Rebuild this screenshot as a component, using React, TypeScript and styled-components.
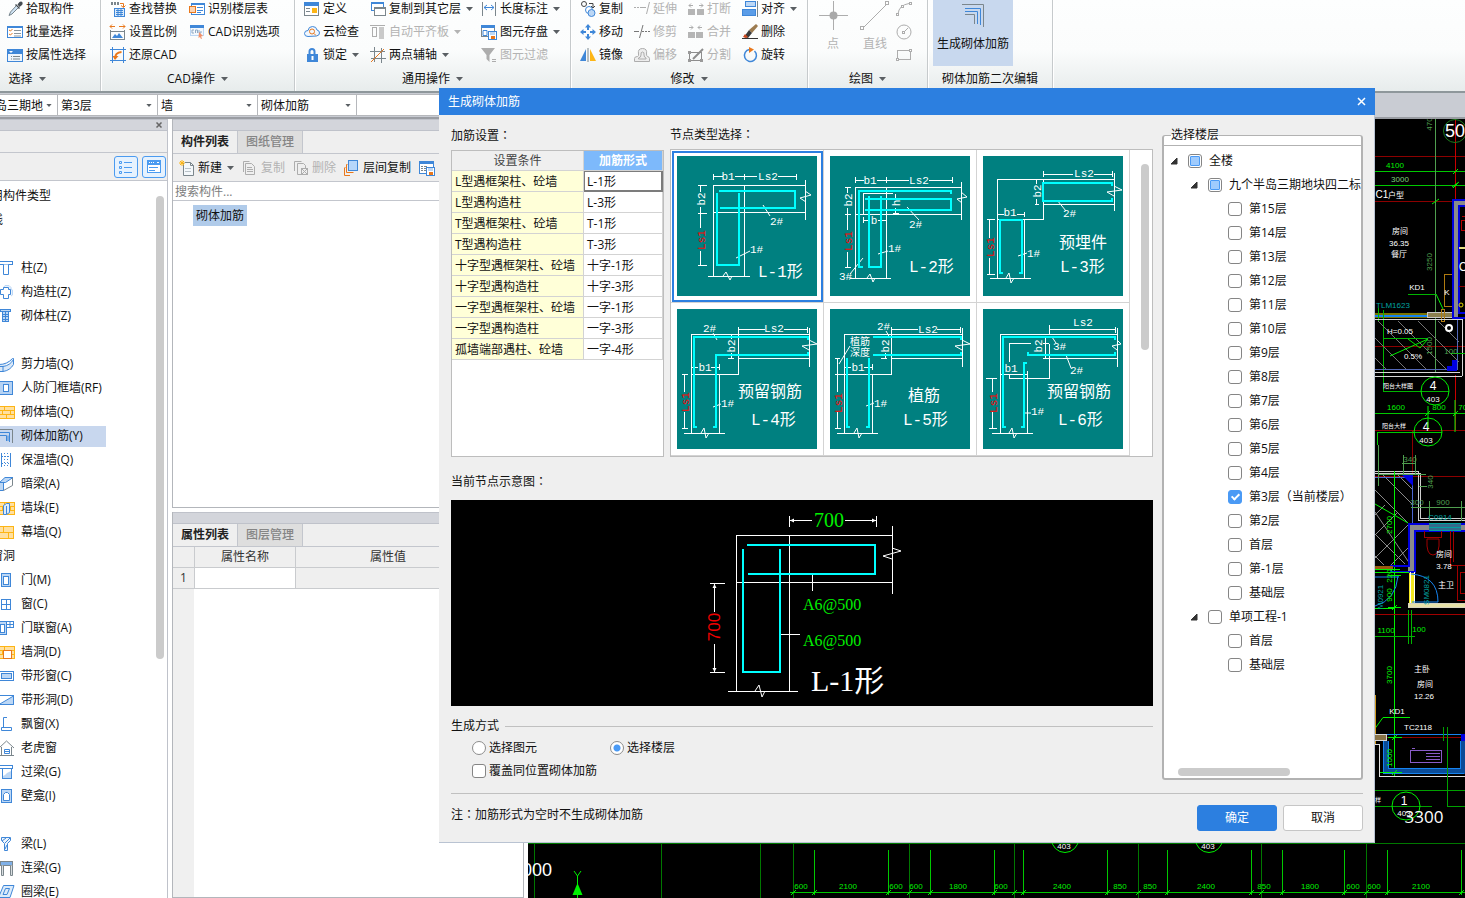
import React from "react";
import styled, { createGlobalStyle, css } from "styled-components";

/* ---------- theme values ---------- */
const BLUE = "#3f87d8";
const PALE = "#bcd7f5";
const GREY = "#7b868c";
const ORANGE = "#e9781c";
const AMBER = "#fdb515";
const SAND = "#ffe0a0";
const MUTE = "#adadad";
const UI_FONT = '"Open Sans", "Noto Sans CJK SC", sans-serif';
const CAD_FONT = '"Liberation Sans", "Noto Sans CJK SC", sans-serif';
const DRAFT_FONT = '"Liberation Mono", "Noto Sans CJK SC", monospace';
const SERIF_FONT = '"Liberation Serif", "Noto Sans CJK SC", serif';

const GlobalStyle = createGlobalStyle`
  *, *::before, *::after { box-sizing: border-box; }
  html, body, #root { height: 100%; }
  body { margin: 0; overflow: hidden; background: #fff; color: #111; font: 12px/16px ${UI_FONT}; }
  button, input, select { font: inherit; color: inherit; }
  ul { list-style: none; margin: 0; padding: 0; }
`;

/* ---------- icons ---------- */
const box = (x: number, y: number, w: number, h: number, stroke: string, fill = "none") => (
  <rect x={x} y={y} width={w} height={h} stroke={stroke} fill={fill} />
);
const line = (d: string, stroke: string, width = 1, fill = "none") => (
  <path d={d} stroke={stroke} strokeWidth={width} fill={fill} />
);
const solid = (d: string, fill: string) => <path d={d} fill={fill} />;

const bricks = (
  <>
    {box(-0.5, 2.5, 16, 12, AMBER, SAND)}
    {line("M0 6.500H15M0 10.500H15M5.500 2.500V6.500M11.500 6.500V10.500M3.500 6.500V10.500M7.500 10.500V14.500", AMBER)}
  </>
);
const floppy = (
  <>
    {box(7.5, 7.5, 8, 8, BLUE, "#fff")}
    {solid("M9 8h5v3h-5z", PALE)}
    {solid("M10 12h4v3h-4z", ORANGE)}
  </>
);

const icons: Record<string, React.ReactNode> = {
  dropper: (
    <>
      {solid("M9 3l4 4-1 1-4-4zM10.500 3.500l2-2.500q2-1 3 .5 .5 1.500-.5 2.500l-2.500 2z", "#454c52")}
      {line("M9 5L3.500 11 2 14.500 5 13 11 7", "#76848c", 1, "#cfe3f4")}
    </>
  ),
  checklist: (
    <>
      {box(0.5, 2.5, 15, 11, BLUE, "#fff")}
      {solid("M0 2h16v2H0z", BLUE)}
      {line("M7 6.500h7M7 9.500h7M7 12h7", "#8b959b")}
      {line("M2 6l1.500 1L5.500 5M2 10l1.500 1L5.500 9", ORANGE)}
    </>
  ),
  attrs: (
    <>
      {box(0.5, 2.5, 15, 12, BLUE, "#eef5fc")}
      {solid("M0 2h16v5H0z", BLUE)}
      {solid("M2 4h4l-2 2z", "#fff")}
      {line("M4 9.500h1M6 9.500h7M4 12h1M6 12h7", GREY)}
    </>
  ),
  replace: (
    <>
      {solid("M1 1h2v3H1zM4 1h2v3H4zM7 1h2v3H7z", GREY)}
      {line("M10 2.500h3.500V6M11 4.500l2.500 2 2-2", ORANGE)}
      {box(4.5, 7.5, 10, 8, BLUE, "#dcebfa")}
      {line("M6 9.500h7M6 11.500h7M6 13.500h7M8 8v7M11 8v7", BLUE)}
    </>
  ),
  scale: (
    <>
      {line("M0 2.500h5M2 .5l-2 2 2 2M9 2.500h6M13 .5l2 2-2 2", ORANGE)}
      {line("M.5 6v10M14.500 6v10M0 7.500h15M0 15.500h15", GREY)}
      {solid("M2 14l3-4 2 2 2-3 4 5z", BLUE)}
    </>
  ),
  restore: (
    <>
      {line("M2.500 0v16M13.500 0v16M0 2.500h16M0 13.500h16", BLUE)}
      {line("M5 11.500q0-6 6.500-6.500", ORANGE, 2)}
      {solid("M2.500 9h6L5 13z", ORANGE)}
    </>
  ),
  floorTable: (
    <>
      {box(2.5, 2.5, 13, 11, BLUE, "#fff")}
      {solid("M2 2h14v2H2z", BLUE)}
      {box(0.5, 5.5, 6, 6, ORANGE, "#fbd4b4")}
      {line("M8 6.500h6M8 9.500h6M8 11.500h4", BLUE)}
    </>
  ),
  cadOption: (
    <>
      {box(1.5, 2.5, 13, 9, PALE, "#f3f8fd")}
      {solid("M1 1h14v3H1z", BLUE)}
      {line("M5 6H3v3h2M6.500 9V6h2v3M10 6v3h2V7", "#8fa9c4")}
      {solid("M10 8l4 4-2 .5 1 2-1 .5-1-2-1.500 1z", "#f2916a")}
    </>
  ),
  define: (
    <>
      {box(0.5, 2.5, 14, 12, GREY, "#fff")}
      {solid("M0 1h15v4H0z", BLUE)}
      {line("M2 7.500h4M2 10.500h4", GREY)}
      {solid("M8 7h5v5H8z", AMBER)}
    </>
  ),
  cloud: (
    <>
      {line("M4 12.500q-3.500 0-3.500-3T4 6.500q.5-4 4.500-4t4.500 3.500q2.500.5 2.500 3t-3 3z", BLUE, 1, "#f1f7fe")}
      <circle cx="8" cy="7.500" r="2.500" stroke={ORANGE} fill="none" />
      {line("M10 9.500l2 2", ORANGE)}
    </>
  ),
  lock: (
    <>
      {line("M5.500 8V4.500q0-2.500 2.500-2.500t2.500 2.500V8", BLUE, 2)}
      {solid("M3 7h11v8H3z", BLUE)}
      {solid("M7.500 9h2v4h-2z", "#fff")}
    </>
  ),
  copyFloor: (
    <>
      {box(1.5, 1.5, 12, 8, BLUE, "#fff")}
      {solid("M1 1h13v2H1z", BLUE)}
      {box(4.5, 6.5, 11, 8, GREY, "#fff")}
      {solid("M4 6h12v2H4z", GREY)}
    </>
  ),
  slab: (
    <>
      {line("M0 1.500h15", MUTE)}
      {box(2.5, 3.5, 4, 9, MUTE)}
      {solid("M9 3h5v12H9z", "#c9c9c9")}
    </>
  ),
  axis: (
    <>
      {line("M4.500 0v15M11.500 1v15M0 4.500h15M1 11.500h15", GREY)}
      {line("M1 15L14 2", ORANGE)}
    </>
  ),
  length: (
    <>
      {line("M1.500 1v14M14.500 1v14", GREY)}
      {line("M3 6.500h10M6 4L3 6.500 6 9M10 4l3 2.500L10 9", BLUE)}
    </>
  ),
  store: (
    <>
      {box(0.5, 1.5, 13, 11, GREY, "#fff")}
      {solid("M0 1h14v3H0z", BLUE)}
      {line("M2 6.500h4v5H2z", BLUE)}
      {floppy}
    </>
  ),
  filter: (
    <>
      {solid("M0 1h14L8.500 8v7L5.500 12V8z", MUTE)}
      {line("M11 12.500h4M11 14.500h4", MUTE)}
    </>
  ),
  duplicate: (
    <>
      <circle cx="4" cy="3" r="2.500" stroke="#444" fill="none" />
      {line("M9 2.500h4V7M11 5l2 2 2-2", "#444")}
      <circle cx="9" cy="9" r="3.500" stroke={BLUE} fill="#fff" />
      <circle cx="11.500" cy="12" r="3.500" stroke={BLUE} fill={PALE} />
    </>
  ),
  move: (
    <>
      {solid("M8 0l3 3.500H9V6H7V3.500H5zM8 16l3-3.500H9V10H7v2.500H5zM0 8l3.500-3v2H6v2H3.500v2zM16 8l-3.500-3v2H10v2h2.500v2z", BLUE)}
    </>
  ),
  mirror: (
    <>
      {solid("M6 2v12H0z", BLUE)}
      {line("M8 1v14", GREY)}
      {solid("M10 2v12h6z", AMBER)}
    </>
  ),
  extend: line("M0 6.500h2M3 6.500h2M6 6.500h2M8 6.500h4M15.500 1l-3 12", MUTE),
  trim: line("M0 7.500h5M9 1L5.500 14M8 7.500h2M11 7.500h2M14 7.500h2", "#777"),
  offset: (
    <>
      {line("M.5 14.500v-3q0-2 3-2 1.500-.5 1-2.500-1-5.500 4-5.500t4 5.500q0 2 1 2.500 2 .5 2 2v3z", MUTE, 1, "#ededed")}
      {line("M4.500 12v-1q2.500-.5 2.500-3-.5-3 1.500-3t1.500 3q0 2.500 2 3v1z", MUTE)}
    </>
  ),
  breakUp: (
    <>
      {solid("M0 8h7v6H0zM9 8h7v6H9z", "#b5b5b5")}
      {line("M1 4.500h4M3 2.500l-2 2 2 2M11 4.500h4M13 2.500l2 2-2 2", MUTE)}
    </>
  ),
  merge: (
    <>
      {solid("M0 8h7v6H0zM8 8h7v6H8z", "#b5b5b5")}
      {line("M1 3.500h4M3 1.500l2 2-2 2M10 3.500h4M12 1.500l-2 2 2 2", MUTE)}
    </>
  ),
  split: (
    <>
      {box(1.5, 5.5, 12, 8, "#8d8d8d")}
      {solid("M0 4h3v3H0zM0 12h3v3H0zM12 12h3v3h-3z", "#9a9a9a")}
      {line("M15 2L5 12", "#8d8d8d", 2)}
    </>
  ),
  align: (
    <>
      {box(3.5, 0.5, 10, 5, BLUE, PALE)}
      {box(0.5, 8.5, 13, 6, BLUE, "#5b9de8")}
      {line("M15.500 0v16", GREY)}
    </>
  ),
  erase: (
    <>
      {line("M0 14.500h16", "#333")}
      {solid("M14 0l2 2-6 7-3-3z", "#9c7b50")}
      {solid("M7 6l3 3-4 5-4-1z", "#3a3a3a")}
      {solid("M3 10l3 3-2 1-3-1z", "#cc4a20")}
    </>
  ),
  rotate: (
    <>
      <path d="M12.500 4a6 6 0 1 1-5-1.500" stroke={BLUE} strokeWidth="1.500" fill="none" />
      {solid("M7 0l5 2.500L7 6z", ORANGE)}
    </>
  ),
  arc: (
    <>
      {line("M2 13Q3 4 13 2.500", MUTE)}
      {box(0.5, 12.5, 2, 2, MUTE, "#fff")}
      {box(5.5, 4.5, 2, 2, MUTE, "#fff")}
      {box(13.5, 1.5, 2, 2, MUTE, "#fff")}
    </>
  ),
  circle: (
    <>
      <circle cx="8" cy="8" r="7" stroke={MUTE} fill="none" />
      {line("M8 8l4-4", MUTE)}
      {box(6.5, 7.5, 2, 2, MUTE, "#fff")}
    </>
  ),
  rect: (
    <>
      {box(1.5, 3.5, 13, 9, MUTE)}
      {box(0.5, 11.5, 2, 2, MUTE, "#fff")}
      {box(13.5, 2.5, 2, 2, MUTE, "#fff")}
    </>
  ),
  newItem: (
    <>
      {line("M4.500 3V15.500h10V5.500L11.500 2.500H6", GREY, 1, "#f4f8fb")}
      {line("M11.500 2.500v3h3", GREY)}
      {line("M6 8.500h6M6 11.500h6", "#b9c2c8")}
      {line("M1 1l4 4M5 1L1 5M3 0v6M0 3h6", AMBER)}
    </>
  ),
  copyDoc: (
    <>
      {line("M1.500 12V1.500h6", MUTE)}
      {line("M3.500 3.500h6l3 3v8h-9z", MUTE)}
      {line("M5 7.500h5M5 9.500h6M5 11.500h6", MUTE)}
    </>
  ),
  removeDoc: (
    <>
      {line("M1.500 11V1.500h7", MUTE)}
      {line("M8 14.500H4.500v-11h6l2 2V8", MUTE)}
      {box(8.5, 8.5, 6, 6, MUTE)}
      {line("M9 9l5 5M14 9l-5 5", MUTE)}
    </>
  ),
  floorCopy: (
    <>
      {line("M3.500 4.500h-1v8h7M.5 8v7.500H6", ORANGE)}
      {line("M.5 7.500h1", ORANGE)}
      {box(4.5, 0.5, 9, 10, BLUE, "#b6d6fa")}
    </>
  ),
  tableSave: (
    <>
      {box(0.5, 1.5, 14, 12, BLUE, "#fff")}
      {solid("M0 1h15v3H0z", BLUE)}
      {line("M2 6.500h2M5 6.500h3M2 8.500h2M5 8.500h2M2 10.500h2M5 10.500h2", GREY)}
      {floppy}
    </>
  ),
  column: (
    <>
      {box(0.5, 1.5, 13, 3, BLUE, "#fff")}
      {line("M4.500 4.500v10h5v-10", BLUE, 1, "#fff")}
    </>
  ),
  structColumn: (
    <>
      {line("M4.500 3.500l1.500-2h4l2 2v1.500l1.500 1v5l-1.500 1", PALE, 1, "#e9f2fc")}
      {line("M4.500 5.500v-2h5v2h2v5h-2v4h-5v-4h-3v-5z", BLUE, 1, "#fff")}
    </>
  ),
  brickColumn: (
    <>
      {box(1.5, 1.5, 10, 2, BLUE, PALE)}
      {box(3.5, 3.5, 6, 10, BLUE, PALE)}
      {line("M3 6.500h7M3 8.500h7M3 11.500h7M6.500 4v9", BLUE)}
    </>
  ),
  shearWall: line("M0 8.500q8 0 13.500-6h1v6Q11 14.500 4 15.500H0zM0 10.500h4v5M4 10.500q7-1 10.500-7", BLUE, 1, "#d9e8f8"),
  frameWall: (
    <>
      {box(0.5, 1.5, 13, 13, BLUE, "#b5d2f3")}
      {box(4.5, 4.5, 5, 7, BLUE, "#fff")}
    </>
  ),
  brickWall: bricks,
  rebar: (
    <>
      {line("M0 1.500h13.500V15", GREY)}
      {line("M0 4.500h10.500V14", BLUE)}
      {line("M1 7.500h6.500V13M9 7.500V13", BLUE)}
    </>
  ),
  insulation: (
    <>
      {line("M2.500 1v14M11.500 1v14", BLUE)}
      <path d="M5.500 1v14M8.500 1v14M0 4.500h12M0 11.500h12" stroke={BLUE} strokeDasharray="1 2" fill="none" />
    </>
  ),
  hiddenBeam: (
    <>
      {line("M.5 6.500L6 1.500h8L6.500 6.500zM.5 6.500h4v8h-4z", BLUE, 1, PALE)}
      {line("M4.500 14.500L13.500 9.500V2", GREY)}
    </>
  ),
  pier: (
    <>
      {bricks}
      {line("M4.500 5.500l3-2h3v9l-3 2h-3zM7.500 6v8", BLUE, 1, "#dcebfa")}
    </>
  ),
  curtainWall: (
    <>
      {box(-0.5, 2.5, 15, 12, AMBER, SAND)}
      {line("M0 8.500h14M4.500 2.500v6M9.500 8.500v6", AMBER)}
    </>
  ),
  door: (
    <>
      {box(2.5, 1.5, 9, 13, BLUE, PALE)}
      {box(4.5, 4.5, 5, 8, BLUE, "#fff")}
    </>
  ),
  window: (
    <>
      {box(2.5, 3.5, 9, 10, BLUE, "#fff")}
      {line("M7.500 3v11M2 8.500h10", BLUE)}
    </>
  ),
  doorWindow: (
    <>
      {box(-0.5, 1.5, 8, 13, BLUE, PALE)}
      {box(1.5, 4.5, 4, 8, BLUE, "#fff")}
      {box(7.5, 1.5, 7, 6, BLUE, "#fff")}
      {line("M11 1v7M7 4.500h8", BLUE)}
    </>
  ),
  wallHole: (
    <>
      {bricks}
      {box(4.5, 6.5, 8, 8, ORANGE, "#fff")}
    </>
  ),
  bandWindow: (
    <>
      {box(-0.5, 3.5, 15, 9, BLUE, "#fff")}
      {box(2.5, 5.5, 10, 5, BLUE, PALE)}
    </>
  ),
  bandHole: (
    <>
      {box(-0.5, 3.5, 15, 9, BLUE, "#fff")}
      {line("M0 12.500L14.500 4v8.500z", BLUE, 1, PALE)}
    </>
  ),
  bayWindow: line("M8 1.500H4.500v10h8v3h-10v-3h3", BLUE),
  dormer: (
    <>
      {line("M0 8L7.500 1 15 8M2.500 7v8.500h10V7M0 15.500h15", GREY)}
      {line("M5.500 9.500h5v4h-5zM5 11.500h6", BLUE)}
    </>
  ),
  lintel: (
    <>
      {box(0.5, 1.5, 13, 3, BLUE, "#fff")}
      {box(3.5, 4.5, 9, 10, BLUE, "#fff")}
      {solid("M4 12l2-1 2-2 4-2v7H4z", PALE)}
    </>
  ),
  niche: (
    <>
      {box(2.5, 1.5, 10, 13, BLUE, PALE)}
      {line("M4.500 12.500v-6l2-2h2l2 2v6z", BLUE, 1, "#fff")}
    </>
  ),
  beam: line("M2.500 1.500h9v3l-3 3v7h-3v-7l-3-3zM3 5l4-3M6 13l2-4M6 7l5-5", BLUE, 1, "#eef5fc"),
  linkBeam: (
    <>
      {box(1.5, 1.5, 12, 4, GREY, "#7fb0e8")}
      {line("M2.500 5.500v10h2v-10M11.500 5.500v10h2v-10", GREY, 1, "#d9dee1")}
    </>
  ),
  ringBeam: line("M4.500 1.500h10.500l-4 12H-.5zM6.500 4.500h4l-2.500 6h-4z", BLUE, 1, "#dcebfa"),
  listView: line("M1.500 2.500h2v2h-2zM1.500 7.500h2v2h-2zM1.500 12.500h2v2h-2zM6 3.500h8M6 8.500h8M6 13.500h8", "#4b9bf0"),
  panelView: (
    <>
      {box(1.5, 1.5, 13, 12, "#4b9bf0", "#fff")}
      {solid("M1 1h14v5H1z", "#4b9bf0")}
      {line("M3 3.500h1M5 3.500h1M7 3.500h1M11 3.500h2", "#fff")}
      {line("M3 8.500h9M3 11.500h6", "#4b9bf0")}
    </>
  ),
};

const IconSvg = styled.svg`
  flex: none;
  width: 16px;
  height: 16px;
  overflow: visible;
`;
const Icon = ({ name }: { name: string }) => (
  <IconSvg viewBox="0 0 16 16" aria-hidden="true">
    {icons[name]}
  </IconSvg>
);

const CaretSvg = styled.svg`
  flex: none;
  width: 7px;
  height: 4px;
`;
const Caret = ({ color = "#5a5f63" }: { color?: string }) => (
  <CaretSvg viewBox="0 0 7 4" aria-hidden="true">
    <path d="M0 0h7L3.500 4z" fill={color} />
  </CaretSvg>
);

/* Full-width colon set in the middle of its cell */
const Colon = styled.span.attrs({ children: "：" })`
  font-family: "Noto Sans CJK JP", sans-serif;
  line-height: 1;
`;

/* ---------- shell ---------- */
const Shell = styled.div`
  display: flex;
  flex-direction: column;
  height: 100vh;
  overflow: hidden;
  position: relative;
`;

/* ---------- ribbon ---------- */
const Ribbon = styled.header`
  display: flex;
  flex: none;
  overflow: hidden;
  background: linear-gradient(#fdfefe 0, #fbfcfc 55%, #e7ecec 100%);
  border-bottom: 2px solid #8e979b;
`;
const Group = styled.section<{ $width: number; $offset?: number }>`
  display: flex;
  flex-direction: column;
  flex: none;
  width: ${(p) => p.$width}px;
  margin-left: ${(p) => p.$offset ?? 0}px;
  border-right: 1px solid #c6cacc;
  box-shadow: 1px 0 0 #fff;
`;
const GroupBody = styled.div<{ $pad: number }>`
  display: flex;
  height: 66px;
  padding-left: ${(p) => p.$pad}px;
`;
const GroupLabel = styled.div`
  display: flex;
  align-items: center;
  justify-content: center;
  gap: 6px;
  height: 25px;
`;
const ToolColumn = styled.div<{ $width?: number }>`
  flex: none;
  width: ${(p) => (p.$width ? p.$width + "px" : "auto")};
  margin-top: -3px;
`;
const ToolButton = styled.button`
  display: flex;
  align-items: center;
  gap: 3px;
  height: 23px;
  padding: 0;
  border: 0;
  background: none;
  white-space: nowrap;
  &:disabled {
    color: #b3b3b3;
  }
  ${CaretSvg} {
    margin-left: 2px;
  }
`;
const BigTool = styled.button`
  display: flex;
  flex-direction: column;
  align-items: center;
  flex: none;
  width: 42px;
  padding: 0;
  border: 0;
  background: none;
  gap: 4px;
  color: #b3b3b3;
  svg {
    width: 32px;
    height: 32px;
  }
`;
const ActiveTool = styled(BigTool)`
  width: 80px;
  height: 66px;
  color: #111;
  background: #c8d8ee;
`;

type Tool = [icon: string, label: string, disabled?: boolean, menu?: boolean];
type ToolGroup = { label: string; width: number; offset?: number; pad: number; columns: { width?: number; tools: Tool[] }[] };

const toolGroups: ToolGroup[] = [
  {
    label: "选择", width: 147, offset: -46, pad: 53,
    columns: [{ tools: [["dropper", "拾取构件"], ["checklist", "批量选择"], ["attrs", "按属性选择"]] }],
  },
  {
    label: "CAD操作", width: 194, pad: 9,
    columns: [
      { width: 79, tools: [["replace", "查找替换"], ["scale", "设置比例"], ["restore", "还原CAD"]] },
      { tools: [["floorTable", "识别楼层表"], ["cadOption", "CAD识别选项"]] },
    ],
  },
  {
    label: "通用操作", width: 276, pad: 9,
    columns: [
      { width: 66, tools: [["define", "定义"], ["cloud", "云检查"], ["lock", "锁定", false, true]] },
      { width: 111, tools: [["copyFloor", "复制到其它层", false, true], ["slab", "自动平齐板", true, true], ["axis", "两点辅轴", false, true]] },
      { tools: [["length", "长度标注", false, true], ["store", "图元存盘", false, true], ["filter", "图元过滤", true]] },
    ],
  },
  {
    label: "修改", width: 237, pad: 9,
    columns: [
      { width: 54, tools: [["duplicate", "复制"], ["move", "移动"], ["mirror", "镜像"]] },
      { width: 54, tools: [["extend", "延伸", true], ["trim", "修剪", true], ["offset", "偏移", true]] },
      { width: 54, tools: [["breakUp", "打断", true], ["merge", "合并", true], ["split", "分割", true]] },
      { tools: [["align", "对齐", false, true], ["erase", "删除"], ["rotate", "旋转"]] },
    ],
  },
];

const RibbonBar = () => (
  <Ribbon>
    {toolGroups.map((g) => (
      <Group key={g.label} $width={g.width} $offset={g.offset}>
        <GroupBody $pad={g.pad}>
          {g.columns.map((c, i) => (
            <ToolColumn key={i} $width={c.width}>
              {c.tools.map(([icon, label, disabled, menu]) => (
                <ToolButton key={label} disabled={disabled}>
                  <Icon name={icon} />
                  {label}
                  {menu && <Caret color={disabled ? "#b3b3b3" : undefined} />}
                </ToolButton>
              ))}
            </ToolColumn>
          ))}
        </GroupBody>
        <GroupLabel>
          {g.label}
          <Caret />
        </GroupLabel>
      </Group>
    ))}
    <Group $width={120}>
      <GroupBody $pad={4}>
        <BigTool disabled>
          <svg viewBox="0 0 32 32">
            {line("M16.500 1v29M2 15.500h29", MUTE)}
            <circle cx="16.500" cy="15.500" r="4" fill="#a9a9a9" />
          </svg>
          点
        </BigTool>
        <BigTool disabled>
          <svg viewBox="0 0 32 32">
            {line("M4 28L28 4", MUTE)}
            {box(1.5, 26.5, 3, 3, MUTE, "#fff")}
            {box(26.5, 1.5, 3, 3, MUTE, "#fff")}
          </svg>
          直线
        </BigTool>
        <ToolColumn $width={24}>
          <ToolButton disabled aria-label="弧"><Icon name="arc" /></ToolButton>
          <ToolButton disabled aria-label="圆"><Icon name="circle" /></ToolButton>
          <ToolButton disabled aria-label="矩形"><Icon name="rect" /></ToolButton>
        </ToolColumn>
      </GroupBody>
      <GroupLabel>
        绘图
        <Caret />
      </GroupLabel>
    </Group>
    <Group $width={125}>
      <GroupBody $pad={5}>
        <ActiveTool>
          <svg viewBox="0 0 32 32">
            {line("M5 4.500h21.500V27", GREY)}
            {line("M8 8.500h15.500V25", BLUE)}
            {line("M8 11.500h12.500V24", BLUE)}
            {line("M8 14.500h9.500V24", GREY)}
          </svg>
          生成砌体加筋
        </ActiveTool>
      </GroupBody>
      <GroupLabel>砌体加筋二次编辑</GroupLabel>
    </Group>
  </Ribbon>
);

/* ---------- selector bar ---------- */
const SelectorBar = styled.div`
  display: flex;
  flex: none;
  height: 26px;
  padding: 1px 0;
  background: #c9ccd3;
  border-bottom: 2px solid #9a9da3;
`;
const SelectorBox = styled.div<{ $width: number; $offset?: number }>`
  display: flex;
  align-items: center;
  flex: none;
  width: ${(p) => p.$width}px;
  margin-left: ${(p) => p.$offset ?? 0}px;
  padding-right: 5px;
  background: #fff;
  border: 1px solid #b6b8bc;
  border-left-width: 0;
  svg {
    width: 6px;
    height: 3px;
  }
`;
const Selector = styled.select`
  appearance: none;
  flex: 1;
  min-width: 0;
  height: 21px;
  padding: 1px 0 0 3px;
  border: 0;
  background: none;
`;

/* ---------- docks ---------- */
const Workspace = styled.div`
  display: flex;
  flex: 1;
  min-height: 0;
`;
const Dock = styled.div`
  display: flex;
  flex-direction: column;
  min-height: 0;
  background: #fff;
`;
const DockTitle = styled.div`
  display: flex;
  flex: none;
  justify-content: flex-end;
  align-items: center;
  height: 12px;
  padding-right: 4px;
  background: #d3d5db;
  border: 1px solid #bfc2ca;
  border-width: 1px 0;
`;
const TinyClose = styled.button`
  padding: 0;
  border: 0;
  background: none;
  line-height: 0;
`;
const CategoryDock = styled(Dock)`
  flex: none;
  width: 168px;
  border-right: 1px solid #bfc2ca;
`;
const DockBand = styled.div`
  flex: none;
  height: 22px;
  background: #efefef;
  border-bottom: 1px solid #c3c6cd;
`;
const ViewSwitch = styled.div`
  display: flex;
  flex: none;
  justify-content: flex-end;
  align-items: center;
  gap: 4px;
  height: 28px;
  padding-right: 1px;
  background: #efefef;
  border-bottom: 1px solid #c3c6cd;
`;
const ViewButton = styled.button`
  display: flex;
  align-items: center;
  justify-content: center;
  width: 24px;
  height: 22px;
  padding: 0;
  border: 1px solid #4b9bf0;
  border-radius: 3px;
  background: #e6f2fe;
`;
const CategoryArea = styled.nav`
  display: flex;
  flex: 1;
  min-height: 0;
  overflow: hidden;
  padding: 3px 3px 0 0;
`;
const CategoryList = styled.ul`
  flex: 1;
  min-width: 0;
`;
const CategoryRow = styled.li`
  display: flex;
  align-items: center;
  height: 24px;
`;
const CategoryHeading = styled(CategoryRow)`
  margin-left: -9px;
`;
const CategoryItem = styled.button<{ $active: boolean }>`
  display: flex;
  align-items: center;
  gap: 6px;
  width: 107px;
  height: 21px;
  margin-left: -1px;
  padding: 0;
  border: 0;
  background: ${(p) => (p.$active ? "#c8d7ee" : "none")};
  white-space: nowrap;
`;
const ScrollThumb = styled.div<{ $length: string }>`
  flex: none;
  width: 8px;
  height: ${(p) => p.$length};
  border-radius: 4px;
  background: #cbcbcb;
`;
const CategoryThumb = styled(ScrollThumb)`
  margin-top: 12px;
`;

const categories: { heading?: string; items: [string, string][] }[] = [
  { heading: "用构件类型", items: [] },
  { heading: "线", items: [] },
  { items: [["column", "柱(Z)"], ["structColumn", "构造柱(Z)"], ["brickColumn", "砌体柱(Z)"]] },
  {
    items: [
      ["shearWall", "剪力墙(Q)"], ["frameWall", "人防门框墙(RF)"], ["brickWall", "砌体墙(Q)"], ["rebar", "砌体加筋(Y)"],
      ["insulation", "保温墙(Q)"], ["hiddenBeam", "暗梁(A)"], ["pier", "墙垛(E)"], ["curtainWall", "幕墙(Q)"],
    ],
  },
  {
    heading: "窗洞",
    items: [
      ["door", "门(M)"], ["window", "窗(C)"], ["doorWindow", "门联窗(A)"], ["wallHole", "墙洞(D)"], ["bandWindow", "带形窗(C)"],
      ["bandHole", "带形洞(D)"], ["bayWindow", "飘窗(X)"], ["dormer", "老虎窗"], ["lintel", "过梁(G)"], ["niche", "壁龛(I)"],
    ],
  },
  { items: [["beam", "梁(L)"], ["linkBeam", "连梁(G)"], ["ringBeam", "圈梁(E)"]] },
];

const ComponentDock = styled.div`
  display: flex;
  flex: none;
  flex-direction: column;
  gap: 4px;
  width: 352px;
  margin: 0 4px;
`;
const ComponentPane = styled(Dock)<{ $size?: number }>`
  flex: ${(p) => (p.$size ? `0 0 ${p.$size}px` : "1")};
  border: 1px solid #b3b6bb;
  border-top: 0;
`;
const Tabs = styled.div`
  display: flex;
  flex: none;
  height: 23px;
  background: #efefef;
  border-bottom: 1px solid #c3c6cd;
`;
const Tab = styled.button<{ $active?: boolean }>`
  width: 65px;
  padding: 0;
  border: 0;
  border-right: 1px solid #c3c6cd;
  background: ${(p) => (p.$active ? "#efefef" : "#dedede")};
  color: ${(p) => (p.$active ? "#222" : "#858585")};
  font-weight: ${(p) => (p.$active ? 700 : 500)};
`;
const PaneTools = styled.div`
  display: flex;
  flex: none;
  align-items: center;
  gap: 8px;
  height: 28px;
  padding-left: 6px;
  background: #efefef;
  border-bottom: 1px solid #c3c6cd;
`;
const SearchBox = styled.input`
  flex: none;
  height: 19px;
  padding: 0 2px;
  border: 0;
  border-bottom: 1px solid #c3c6cd;
  outline: 0;
  &::placeholder {
    color: #7d7d7d;
  }
`;
const ComponentTree = styled.ul`
  padding: 4px 20px;
`;
const SelectedNode = styled.button`
  display: block;
  height: 21px;
  padding: 0 3px;
  border: 0;
  background: #b0cbea;
`;
const PropertyArea = styled.div`
  flex: 1;
  background: linear-gradient(90deg, #f0f0f0 21px, #fff 21px);
`;
const PropertyTable = styled.table`
  width: 100%;
  table-layout: fixed;
  border-collapse: separate;
  border-spacing: 0;
  th,
  td {
    height: 21px;
    padding: 0;
    border: 1px solid #c9cbce;
    border-width: 0 1px 1px 0;
    background: #efefef;
    color: #333;
    font-weight: 400;
    text-align: center;
  }
  td:nth-child(2) {
    background: #fff;
  }
`;

/* ---------- CAD drawing ---------- */
const CadView = styled.main`
  flex: 1;
  min-width: 0;
  background: #000;
  svg {
    display: block;
    width: 100%;
    height: 100%;
    font-family: ${CAD_FONT};
  }
`;
type TextProps = { x: number; y: number; children: React.ReactNode; fill?: string; size?: number; turn?: boolean };
const CadText = ({ x, y, children, fill = "#fff", size = 8, turn }: TextProps) => (
  <text x={x} y={y} fill={fill} fontSize={size} textAnchor="middle" transform={turn ? `rotate(-90 ${x} ${y})` : undefined}>
    {children}
  </text>
);

const LIME = "#00f000";
const FOREST = "#007800";
const MOSS = "#4f9e4f";
const MAROON = "#8c0000";
const NAVY = "#0000e0";
const TEAL = "#00a0a0";
const axisLines = [534, 661, 760, 793, 909, 1014, 1261, 1366, 1138];
const dimLines = [814, 888, 930, 994, 1023, 1107, 1167, 1251, 1282, 1344, 1387, 1461];
const dimLabels: [number, string][] = [
  [801, "600"], [848, "2100"], [896, "600"], [916, "600"], [958, "1800"], [1001, "600"], [1062, "2400"], [1120, "850"],
  [1150, "850"], [1206, "2400"], [1264, "850"], [1310, "1800"], [1353, "600"], [1374, "600"], [1421, "2100"],
];

const CadDrawing = () => (
  <CadView>
    <svg viewBox="528 119 937 779" preserveAspectRatio="xMinYMin slice">
      {/* axis grid along the foot of the plan */}
      <g shapeRendering="crispEdges">
        {line("M528 843.500H1465", FOREST)}
        {axisLines.map((x) => <path key={x} d={`M${x}.5 843V898`} stroke={FOREST} />)}
        {dimLines.map((x) => <path key={x} d={`M${x}.5 850V895`} stroke="#00c800" />)}
        {line("M790 892.500H1465", "#00c800")}
      </g>
      {[793, 909, 1014, 1138, 1261, 1366, ...dimLines].map((x) => <path key={x} d={`M${x - 2} 895l5-5`} stroke={LIME} />)}
      {dimLabels.map(([x, t]) => <CadText key={x} x={x} y={889} fill={LIME}>{t}</CadText>)}
      {[1065, 1209].map((x) => (
        <g key={x}>
          <circle cx={x} cy="839" r="13.500" stroke={LIME} fill="none" />
          <CadText x={x - 1} y={849}>403</CadText>
        </g>
      ))}
      <CadText x={537} y={876} size={18}>000</CadText>
      {line("M574 871l3.500 5 3.500-5M577.500 876v10", LIME)}
      {solid("M577.500 883l5 12h-10z", LIME)}
      {solid("M577 895h1v3h-1z", LIME)}

      {/* upper room */}
      <g shapeRendering="crispEdges">
        {line("M1375 156.500H1465M1375 201.500H1452M1375 346.500H1465M1375 430.500H1465M1412.500 430V475M1375 476.500H1465", MAROON)}
        {line("M1455.500 119V199M1455.500 375V430", "#c80000")}
        {line("M1375 171.500H1465M1375 185.500H1465", "#00c800")}
        {line("M1435.500 119V372", MOSS)}
        {line("M1375 315.500H1428", "#7a7400", 5)}
        {line("M1375 315.500H1428", "#1683f0", 2)}
        {box(1427.5, 312.5, 25, 5, "#c8c8c8", "#8b8050")}
        {line("M1444.500 274.500h8v32h-8zM1441.500 309.500h3v12h-3z", "#b07b10")}
        {solid("M1452 199h13v6h-7v113h-6z", "#8a8a8a")}
        {line("M1465 199.500h-12.500v118.500H1465M1465 205.500h-6.500V313H1465", NAVY, 2)}
        {line("M1459 247.500h6", "#e8e080", 2)}
        {line("M1459 286h6", MAROON)}
        {line("M1461 220h4v10h-4zM1462 216h3", "#b00000")}
        {line("M1408 294.500h28M1383.500 310V391.500H1449M1378.500 308v14", "#00b400")}
      </g>
      {line("M1436 294l7 15", LIME)}
      <circle cx="1455" cy="131" r="11.500" stroke="#1c7c1c" fill="none" />
      <CadText x={1455} y={137} size={18}>50</CadText>
      <CadText x={1432} y={124} fill={MOSS} turn>470</CadText>
      <CadText x={1395} y={168} fill={LIME}>4100</CadText>
      <CadText x={1400} y={182} fill="#7fd07f">3000</CadText>
      <CadText x={1382} y={198} size={10}>C1</CadText>
      <CadText x={1396} y={198}>户型</CadText>
      <CadText x={1400} y={234}>房间</CadText>
      <CadText x={1399} y={246}>36.35</CadText>
      <CadText x={1399} y={257}>餐厅</CadText>
      <CadText x={1432} y={262} fill={MOSS} turn>3250</CadText>
      <CadText x={1417} y={290}>KD1</CadText>
      <CadText x={1447} y={295}>K</CadText>
      <CadText x={1463} y={271} size={12}>C</CadText>
      <CadText x={1393} y={308} fill={TEAL}>TLM1623</CadText>
      {line("M1432 204l7-5M1452 187l7-5", LIME)}

      {/* balcony */}
      {line(
        "M1375 358l12 12M1375 338l32 32M1378 321l49 49M1398 321l49 49M1418 321l41 41M1438 321l21 21",
        "#747474",
      )}
      <g shapeRendering="crispEdges">
        {line("M1375 319.500H1462M1462.500 319V376M1375 372.500H1460M1375 376.500H1462", "#d8d8d8")}
        {line("M1375 369.500H1457V320", "#5368b8")}
        {line("M1383 338.500H1428M1450 353.500h15", "#00b400")}
        {line("M1375 413.500H1465M1377.500 445V432.500H1442", "#00c800")}
      </g>
      {solid("M1457 360v11h-10v-5h5v-6z", NAVY)}
      {line("M1390 356l38-17-8 9-12-9", LIME)}
      <circle cx="1449" cy="328" r="3" stroke="#fff" strokeWidth="2" fill="none" />
      <circle cx="1461" cy="305" r="2" stroke="#e8d800" fill="none" />
      <CadText x={1400} y={334}>H=0.05</CadText>
      <CadText x={1413} y={359}>0.5%</CadText>
      <CadText x={1432} y={346} fill={MOSS} turn>1500</CadText>
      <CadText x={1451} y={354} fill={MOSS}>100</CadText>
      <CadText x={1398} y={388} size={6}>阳台大样图</CadText>
      <circle cx="1435" cy="391" r="14" stroke={LIME} fill="none" />
      <CadText x={1433} y={390} size={12}>4</CadText>
      <CadText x={1433} y={402}>403</CadText>
      <CadText x={1396} y={410} fill={LIME}>1600</CadText>
      <CadText x={1439} y={410} fill={LIME}>800</CadText>
      <CadText x={1465} y={410} fill={LIME}>700</CadText>
      <CadText x={1394} y={428} size={6}>阳台大样</CadText>
      <circle cx="1428" cy="432" r="14" stroke={LIME} fill="none" />
      <CadText x={1426} y={431} size={12}>4</CadText>
      <CadText x={1426} y={443}>403</CadText>
      {line("M1428 406v22M1455 400v32M1453 416l5-5M1425 416l5-5", LIME)}

      {/* shaft and bathroom */}
      {line(
        "M1375 490l38 38M1375 512l35 52M1375 534l30 30M1383 475l30 30M1398 475l15 15M1375 556l9 9M1408 525l-33 33M1408 548l-17 17M1398 512l-23 23M1385 505l-10 10",
        "#8a8a8a",
      )}
      {line("M1375 504l33 19", LIME)}
      <g shapeRendering="crispEdges">
        {line("M1375 471.500H1418.500V520.500H1465M1375 473.500H1420.500V518.500H1465", "#cfcfcf")}
        {line("M1375 477.500H1412V523", "#4a66d0")}
        {line("M1378.500 445V486M1378 474.500H1426M1402 463.500h14M1403.500 455v20M1415.500 455v20M1419 486.500h8M1411 507.500H1465M1429.500 501v20M1461.500 501v20", MOSS)}
        {line("M1394.500 471V776", LIME)}
        {solid("M1408 523h57v8h-49v42h-8z", "#8a8a8a")}
        {line("M1465 524h-56v42h-18v6H1415v-41.500h50", NAVY, 2)}
        {solid("M1429 524h32v7h-32z", "#35698c")}
        {line("M1429 523.500h32M1429 530.500h32M1429 527.500h32", TEAL)}
        {line("M1375 567.500h18", "#9a5a10", 3)}
        {line("M1375 569.500h25M1375 572.500h34", LIME)}
        {solid("M1409 573h6v30h-6z", "#f4e820")}
        {line("M1410 572v31M1414 572v31", "#fff")}
        {box(1408.5, 603.5, 58, 4, "#d8d4c0", "#e8e2a8")}
        {line("M1375 614.500H1465", "#a00000")}
        {line("M1424.500 531v6h17v-6M1450.500 531v34.500H1465M1453.500 531v31M1465 565.500h-7.500v35H1465M1465 572.500h-4.500v21h4.500", "#a00000")}
        {line("M1375 636.500h40M1408.500 610v34M1411.500 610v34", "#00b400")}
        {line("M1375 608.500h20M1388 607.500h13M1388 575h13", LIME)}
      </g>
      {solid("M1413 475v11l-11-11z", NAVY)}
      {line("M1427 539q-1 16 6 16t6-16z", "#a00000")}
      {line("M1411 574q27 2 27 28h-26M1398 576q-2 24-23 30M1375 577h24", "#1683f0")}
      <CadText x={1410} y={462} fill={MOSS}>340</CadText>
      <CadText x={1433} y={482} fill={MOSS} turn>340</CadText>
      <CadText x={1417} y={505} fill={MOSS}>300</CadText>
      <CadText x={1443} y={505} fill={MOSS}>900</CadText>
      <CadText x={1440} y={520} fill={TEAL}>C0914</CadText>
      <CadText x={1392} y={525} fill={LIME} turn>2700</CadText>
      <CadText x={1392} y={576} fill={LIME} turn>220</CadText>
      <CadText x={1392} y={595} fill={LIME} turn>900</CadText>
      <CadText x={1383} y={597} fill={TEAL} turn>M0921</CadText>
      <CadText x={1429} y={590} fill={TEAL} turn>SM0821</CadText>
      <CadText x={1444} y={557}>房间</CadText>
      <CadText x={1444} y={569}>3.78</CadText>
      <CadText x={1446} y={588}>主卫</CadText>
      <CadText x={1386} y={633} fill={LIME}>1100</CadText>
      <CadText x={1419} y={632} fill={LIME}>100</CadText>

      {/* bedroom and window */}
      <CadText x={1422} y={672}>主卧</CadText>
      <CadText x={1425} y={687}>房间</CadText>
      <CadText x={1424} y={699}>12.26</CadText>
      <CadText x={1392} y={675} fill={LIME} turn>3700</CadText>
      <CadText x={1397} y={714}>KD1</CadText>
      <CadText x={1418} y={730}>TC2118</CadText>
      {line("M1410 717.500h-27l-8 11", LIME)}
      <g shapeRendering="crispEdges">
        {line("M1375.500 695v50", "#d09a20")}
        {line("M1387 734.500H1465", "#1683f0")}
        {line("M1387 737.500H1465", MAROON)}
        {box(1374.5, 734.5, 12, 6, "#d8d8d8", "#8a7448")}
        {line("M1385.500 741v30.500H1462.500V741", "#0a4c98", 5)}
        {line("M1388 741v27.500H1460V741M1383.500 741v32.500H1464", "#1683f0")}
        {solid("M1461 734h4v7h-4z", NAVY)}
        {line("M1375 744.500h4.500V776H1465", "#e0e0e0")}
        {line("M1443.500 727v14M1447.500 727V806.500M1375 790.500H1465M1375 806.500H1432M1447 806.500H1465", "#00a000")}
        {line("M1380 772.500h22M1388 737.500h14", LIME)}
        {box(1410.5, 750.5, 31, 12, "#8a5cc8")}
        {line("M1426 753.500h14M1426 756.500h14M1426 759.500h14M1412 748.500h3", "#8a5cc8")}
      </g>
      <CadText x={1392} y={758} fill={LIME} turn>1000</CadText>
      <circle cx="1406" cy="806" r="14" stroke={LIME} fill="none" />
      <CadText x={1404} y={805} size={12}>1</CadText>
      <CadText x={1404} y={816}>403</CadText>
      <CadText x={1378} y={802} size={6}>样</CadText>
      <text x="1424" y="823" fill="#fff" fontSize="17" textAnchor="middle" fontFamily={UI_FONT}>3300</text>
      {[171, 185].map((y) => <path key={y} d={`M1453 ${y + 3}l5-5`} stroke={LIME} />)}
      {[607, 737, 772].map((y) => <path key={y} d={`M1392 ${y + 3}l5-5`} stroke={LIME} />)}
    </svg>
  </CadView>
);

/* ---------- rebar joint thumbnails ---------- */
type DraftProps = TextProps & { mid?: boolean; family?: string };
const DraftText = ({ x, y, children, fill = "#fff", size = 11, turn, mid, family }: DraftProps) => (
  <text
    x={x}
    y={y}
    fill={fill}
    fontSize={size}
    fontFamily={family}
    textAnchor={turn || mid ? "middle" : "start"}
    transform={turn ? `rotate(-90 ${x} ${y})` : undefined}
  >
    {children}
  </text>
);
type Joint = { name: string; walls: string; leaders: string; bars: string; texts: React.ReactNode };

const joints: Joint[] = [
  {
    name: "L-1形",
    walls:
      "M36.500 18v6M67.500 18v6M119.500 18v6M37 20.500h9M58 20.500h22M101 20.500h18M36.500 120V29.500H128.500M67.500 29V120M36.500 56.500H128.500M128.500 24V64M31 120.500H73M21 29.500h9M21 57.500h9M21 109.500h9M23.500 30v6M23.500 51v21M23.500 95v14",
    leaders: "M128 35l6 4-11 3 6 4M46 120l3-4 4 8 2-4M86 49l7 11M59 102l14-7",
    bars: "M42 35H118V52H43M40 37V109H62V37",
    texts: (
      <>
        <DraftText x={51} y={24} mid>b1</DraftText>
        <DraftText x={91} y={24} mid>Ls2</DraftText>
        <DraftText x={28} y={43} turn>b2</DraftText>
        <DraftText x={28} y={84} turn fill="#f00">Ls1</DraftText>
        <DraftText x={93} y={69}>2#</DraftText>
        <DraftText x={73} y={97}>1#</DraftText>
        <DraftText x={81} y={121} size={16}>L-1形</DraftText>
      </>
    ),
  },
  {
    name: "L-2形",
    walls:
      "M25.500 21v6M56.500 21v6M122.500 21v6M26 24.500h8M47 24.500h32M99 24.500h23M25.500 122V31.500H131.500M56.500 31V122M25.500 58.500H131.500M131.500 26V64M20 122.500H61M33.500 58V37.500H63M65.500 38v4M65.500 52v6M63 57.500h6M33.500 61v6M56.500 61v6M34 64.500h5M48 64.500h8M15 31.500h6M15 58.500h6M15 111.500h6M17.500 32v5M17.500 52v22M17.500 96v15",
    leaders: "M131 36l6 5-10 2 5 4M37 122l3-4 3 8 2-4M77 51l12 13M48 98l10-3M20 118l13-16",
    bars: "M121 38V35H29V111H33M35 43H121V54H35M39 40V111H51V40",
    texts: (
      <>
        <DraftText x={40} y={28} mid>b1</DraftText>
        <DraftText x={89} y={28} mid>Ls2</DraftText>
        <DraftText x={44} y={68} mid>b</DraftText>
        <DraftText x={70} y={47} turn>h</DraftText>
        <DraftText x={22} y={44} turn>b2</DraftText>
        <DraftText x={22} y={85} turn fill="#f00">Ls1</DraftText>
        <DraftText x={79} y={72}>2#</DraftText>
        <DraftText x={58} y={96}>1#</DraftText>
        <DraftText x={9} y={124}>3#</DraftText>
        <DraftText x={79} y={116} size={16}>L-2形</DraftText>
      </>
    ),
  },
  {
    name: "L-3形",
    walls:
      "M60.500 15v6M129.500 15v6M61 18.500h29M111 18.500h18M14.500 122V23.500H131.500M60.500 23V63.500H14M60.500 48.500H131.500M131.500 17V55M41.500 63V122M7 122.500H48M14.500 56v5M41.500 56v5M15 58.500h6M34 58.500h7M52 23.500h4M52 48.500h4M53.500 24v4M53.500 43v5M4 63.500h8M4 118.500h8M6.500 64v18M6.500 102v16",
    leaders: "M131 30l8 4-15 2 7 4M23 122l3-5 2 10 3-5M74 44l9 11M35 100l9-3",
    bars: "M129 30V27H60V45H129V42M20 117H17V64H39V117H36",
    texts: (
      <>
        <DraftText x={101} y={21} mid>Ls2</DraftText>
        <DraftText x={27} y={60} mid>b1</DraftText>
        <DraftText x={58} y={35} turn>b2</DraftText>
        <DraftText x={11} y={91} turn fill="#f00">Ls1</DraftText>
        <DraftText x={80} y={61}>2#</DraftText>
        <DraftText x={44} y={101}>1#</DraftText>
        <DraftText x={76} y={92} size={16}>预埋件</DraftText>
        <DraftText x={77} y={116} size={16}>L-3形</DraftText>
      </>
    ),
  },
  {
    name: "L-4形",
    walls:
      "M61.500 18V65.500H14M130.500 18v6M62 20.500h26M107 20.500h23M14.500 124V25.500H132.500M61.500 49.500H132.500M132.500 19V58M42.500 65V124M7 124.500H48M42.500 55v6M15 58.500h6M34 58.500h8M51 49.500h6M54.500 44v5M54.500 26v4M5 65.500h6M5 119.500h6M7.500 66v17M7.500 103v16",
    leaders: "M132 31l8 4-15 2 7 4M24 124l3-5 2 10 3-5M36 24l4 7M36 98l8-3",
    bars: "M131 31V28H17V118H20M131 43V46H39V118H36",
    texts: (
      <>
        <DraftText x={26} y={23}>2#</DraftText>
        <DraftText x={97} y={23} mid>Ls2</DraftText>
        <DraftText x={28} y={62} mid>b1</DraftText>
        <DraftText x={58} y={37} turn>b2</DraftText>
        <DraftText x={12} y={93} turn fill="#f00">Ls1</DraftText>
        <DraftText x={44} y={98}>1#</DraftText>
        <DraftText x={61} y={88} size={16}>预留钢筋</DraftText>
        <DraftText x={74} y={116} size={16}>L-4形</DraftText>
      </>
    ),
  },
  {
    name: "L-5形",
    walls:
      "M61.500 18V65.500H5M130.500 18v6M62 20.500h26M107 20.500h23M14.500 124V25.500H132.500M61.500 49.500H132.500M132.500 19V58M42.500 65V124M7 124.500H48M42.500 55v6M15 58.500h6M34 58.500h8M51 49.500h6M55.500 44v5M5 49.500h5M5 119.500h6M7.500 50v33M7.500 103v16",
    leaders: "M132 31l8 4-15 2 7 4M24 124l3-5 2 10 3-5M56 22l4 7M36 97l8-3M20 37l-11 18",
    bars: "M43 28H131V31M43 46H131V43M17 49V118H20M39 49V118H36",
    texts: (
      <>
        <DraftText x={47} y={21}>2#</DraftText>
        <DraftText x={98} y={24} mid>Ls2</DraftText>
        <DraftText x={20} y={36} size={10}>植筋</DraftText>
        <DraftText x={20} y={47} size={10}>深度</DraftText>
        <DraftText x={28} y={62} mid>b1</DraftText>
        <DraftText x={59} y={37} turn>b2</DraftText>
        <DraftText x={12} y={94} turn fill="#f00">Ls1</DraftText>
        <DraftText x={44} y={98}>1#</DraftText>
        <DraftText x={78} y={92} size={16}>植筋</DraftText>
        <DraftText x={73} y={116} size={16}>L-5形</DraftText>
      </>
    ),
  },
  {
    name: "L-6形",
    walls:
      "M66.500 16v10M132.500 18v6M67 20.500h65M17.500 124V25.500H134.500M60 49.500H134.500M134.500 19V58M44.500 62V124M17 65.500H44M9 124.500H50M26.500 53V34.500H48M60 34.500h6M66.500 35V69.500H26.500V66M62.500 29v20M3 69.500h11M6 119.500h8M9.500 70v13M9.500 103v16",
    leaders: "M134 31l4 4-9 2 5 4M26 124l3-5 2 10 3-5M69 28l4 6M83 46l5 13M42 104h6",
    bars: "M132 31V28H20V118H23M132 43V46H45V43M44 54H41V118H38",
    texts: (
      <>
        <DraftText x={100} y={17} mid>Ls2</DraftText>
        <DraftText x={70} y={41}>3#</DraftText>
        <DraftText x={28} y={63} mid>b1</DraftText>
        <DraftText x={59} y={37} turn>b2</DraftText>
        <DraftText x={14} y={94} turn fill="#f00">Ls1</DraftText>
        <DraftText x={87} y={65}>2#</DraftText>
        <DraftText x={48} y={106}>1#</DraftText>
        <DraftText x={64} y={88} size={16}>预留钢筋</DraftText>
        <DraftText x={75} y={116} size={16}>L-6形</DraftText>
      </>
    ),
  },
];

const JointSvg = styled.svg`
  display: block;
  width: 140px;
  height: 140px;
  background: #008080;
  font-family: ${DRAFT_FONT};
`;
const JointDrawing = ({ joint }: { joint: Joint }) => (
  <JointSvg viewBox="0 0 140 140">
    <path d={joint.walls} stroke="#fff" fill="none" shapeRendering="crispEdges" />
    <path d={joint.leaders} stroke="#fff" fill="none" />
    <path d={joint.bars} stroke="#0ff" strokeWidth="2" fill="none" shapeRendering="crispEdges" />
    {joint.texts}
  </JointSvg>
);

/* ---------- dialog ---------- */
const Dialog = styled.div`
  position: absolute;
  top: 88px;
  left: 439px;
  right: 90px;
  background: #efefef;
  border-bottom: 1px solid #b9c3d2;
  box-shadow: inset -1px 0 0 #b9c3d2;
`;
const DialogTitle = styled.div`
  display: flex;
  align-items: center;
  justify-content: space-between;
  height: 27px;
  padding: 0 9px;
  background: #2c7fe0;
  color: #fff;
`;
const DialogClose = styled.button`
  padding: 0;
  border: 0;
  background: none;
  line-height: 0;
`;
const DialogBody = styled.form`
  padding: 12px 12px 11px;
`;
const DialogColumns = styled.div`
  display: flex;
  gap: 9px;
`;
const Designer = styled.div`
  flex: 1;
  min-width: 0;
`;
const TopPanels = styled.div`
  display: flex;
  align-items: flex-end;
  gap: 6px;
`;
const Titled = styled.div<{ $grow?: boolean }>`
  display: flex;
  flex-direction: column;
  gap: 6px;
  flex: ${(p) => (p.$grow ? 1 : "none")};
  min-width: 0;
`;
const SettingsPanel = styled.div`
  width: 213px;
  height: 307px;
  background: #fff;
  border: 1px solid #bdbdbd;
`;
const SettingsTable = styled.table`
  width: 100%;
  table-layout: fixed;
  border-collapse: separate;
  border-spacing: 0;
  th,
  td {
    height: 21px;
    padding: 1px 3px 0;
    border: 1px solid #d3d3d3;
    border-width: 0 1px 1px 0;
    font-weight: 400;
    text-align: left;
    white-space: nowrap;
  }
  th {
    height: 20px;
    background: #efefef;
    color: #444;
    text-align: center;
  }
  th:last-child {
    background: #7db9fb;
    color: #fff;
    font-weight: 700;
  }
  td:first-child {
    background: #ffffd8;
  }
`;
const ShapeCell = styled.td<{ $focus?: boolean }>`
  ${(p) =>
    p.$focus &&
    css`
      box-shadow: inset 1px 1px 0 #7c7c7c, inset -1px -1px 0 #7c7c7c;
      border-color: #7c7c7c !important;
    `}
`;
const JointPanel = styled.div`
  display: flex;
  justify-content: space-between;
  height: 308px;
  padding-right: 3px;
  background: #fff;
  border: 1px solid #bdbdbd;
`;
const JointGrid = styled.ul`
  display: flex;
  flex-wrap: wrap;
  align-content: flex-start;
  flex: 1;
  max-width: 459px;
`;
const JointCell = styled.li`
  width: 153px;
  height: 153px;
  padding: 1px 0 0 1px;
  border: 1px solid #d3d3d3;
  border-width: 0 1px 1px 0;
`;
const JointButton = styled.button<{ $selected: boolean }>`
  display: block;
  padding: 3px 4px 4px 3px;
  border: 2px solid ${(p) => (p.$selected ? "#2c7fe0" : "#fff")};
  background: #fff;
`;
const JointThumb = styled(ScrollThumb)`
  margin-top: 14px;
`;
const PreviewTitle = styled.div`
  margin: 17px 0 10px;
`;
const Preview = styled.svg`
  display: block;
  width: 100%;
  height: 206px;
  background: #000;
  font-family: ${SERIF_FONT};
`;
const ModeSet = styled.fieldset`
  margin: 12px 0 0;
  padding: 6px 0 0 21px;
  border: 0;
  border-top: 1px solid #c0c0c0;
  legend {
    margin-left: -21px;
    padding: 0 6px 0 0;
  }
`;
const ModeRow = styled.div`
  display: flex;
  margin-bottom: 7px;
  &:last-child {
    margin-bottom: 0;
  }
`;
const Choice = styled.label<{ $width?: number }>`
  display: flex;
  align-items: center;
  gap: 3px;
  width: ${(p) => (p.$width ? p.$width + "px" : "auto")};
`;
const Radio = styled.input.attrs({ type: "radio" })`
  appearance: none;
  flex: none;
  width: 14px;
  height: 14px;
  margin: 0;
  border: 1px solid #8c8c8c;
  border-radius: 50%;
  background: #fff;
  &:checked {
    background: radial-gradient(circle, #4a9af5 3px, #fff 4px);
  }
`;
const Tick = styled.input.attrs({ type: "checkbox" })<{ $mixed?: boolean }>`
  appearance: none;
  display: block;
  flex: none;
  width: 14px;
  height: 14px;
  margin: 0;
  border: 1px solid #858585;
  border-radius: 3px;
  background: #fff;
  &:checked {
    border-color: #4a9af5;
    background: #4a9af5;
  }
  &:checked::after {
    content: "";
    display: block;
    width: 5px;
    height: 8px;
    margin: 1px 0 0 4px;
    border: solid #fff;
    border-width: 0 2px 2px 0;
    transform: rotate(45deg);
  }
  ${(p) =>
    p.$mixed &&
    css`
      &::after {
        content: "";
        display: block;
        width: 10px;
        height: 10px;
        margin: 1px;
        border: 1px solid #4a9af5;
        border-radius: 1px;
        background: #9fcbfd;
      }
    `}
`;
const FloorSet = styled.fieldset`
  flex: none;
  width: 201px;
  min-width: 0;
  margin: 0;
  padding: 2px 0 0;
  border: 2px solid #b2b2b2;
  border-top-width: 1px;
  border-radius: 3px;
  background: #fff;
  legend {
    margin-left: 7px;
    padding: 0;
  }
`;
const FloorPane = styled.div`
  display: flex;
  flex-direction: column;
  min-height: 633px;
  padding: 3px 0 2px;
  border-top: 1px solid #b2b2b2;
  overflow: hidden;
`;
const FloorRow = styled.li<{ $level: number }>`
  display: flex;
  align-items: center;
  height: 24px;
  padding-left: ${(p) => 4 + p.$level * 20}px;
  white-space: nowrap;
  label {
    display: flex;
    align-items: center;
    gap: 7px;
  }
`;
const Twist = styled.svg`
  flex: none;
  width: 20px;
  height: 10px;
`;
const FloorThumb = styled.div`
  width: 112px;
  height: 8px;
  margin: auto 0 0 14px;
  border-radius: 4px;
  background: #cbcbcb;
`;
const Rule = styled.hr`
  margin: 13px 0 11px;
  border: 0;
  border-top: 1px solid #c0c0c0;
`;
const Footer = styled.div`
  display: flex;
  align-items: center;
  gap: 6px;
`;
const Note = styled.p`
  flex: 1;
  margin: 0 0 6px;
`;
const DialogButton = styled.button<{ $primary?: boolean }>`
  width: 80px;
  height: 26px;
  padding: 0;
  border: 1px solid ${(p) => (p.$primary ? "#2c7fe0" : "#c6c6c6")};
  border-radius: 3px;
  background: ${(p) => (p.$primary ? "#2c7fe0" : "#fff")};
  color: ${(p) => (p.$primary ? "#fff" : "#111")};
`;

const settings: [string, string][] = [
  ["L型遇框架柱、砼墙", "L-1形"],
  ["L型遇构造柱", "L-3形"],
  ["T型遇框架柱、砼墙", "T-1形"],
  ["T型遇构造柱", "T-3形"],
  ["十字型遇框架柱、砼墙", "十字-1形"],
  ["十字型遇构造柱", "十字-3形"],
  ["一字型遇框架柱、砼墙", "一字-1形"],
  ["一字型遇构造柱", "一字-3形"],
  ["孤墙端部遇柱、砼墙", "一字-4形"],
];

type Floor = { label: string; level: number; branch?: boolean; mixed?: boolean; checked?: boolean };
const floors: Floor[] = [
  { label: "全楼", level: 0, branch: true, mixed: true },
  { label: "九个半岛三期地块四二标", level: 1, branch: true, mixed: true },
  ...[15, 14, 13, 12, 11, 10, 9, 8, 7, 6, 5, 4].map((n) => ({ label: `第${n}层`, level: 2 })),
  { label: "第3层（当前楼层）", level: 2, checked: true },
  { label: "第2层", level: 2 },
  { label: "首层", level: 2 },
  { label: "第-1层", level: 2 },
  { label: "基础层", level: 2 },
  { label: "单项工程-1", level: 1, branch: true },
  { label: "首层", level: 2 },
  { label: "基础层", level: 2 },
];

const PreviewDrawing = () => (
  <Preview viewBox="0 0 702 206">
    <g shapeRendering="crispEdges" fill="none">
      <path
        stroke="#fff"
        d="M338.500 16v11M425.500 16v11M339 20.500h22M394 20.500h31M285.500 191V35.500H441.500M338.500 35V191M285.500 82.500H441.500M441.500 26V94M277 191.500H347M361.500 74v17M330 134.500h19M259 83.500h15M259 172.500h15M263.500 84v28M263.500 144v28"
      />
      <path stroke="#0ff" strokeWidth="2" d="M296 45H424V74H297M292 49V172H329V49" />
    </g>
    {line("M441 48l9 3-18 5 9 3M304 191l4-6 3 12 3-6", "#fff")}
    {solid("M339 20.500l4-2v4zM425 20.500l-4-2v4zM263.500 84l-2 4h4zM263.500 172l-2-4h4z", "#fff")}
    <DraftText x={378} y={27} size={20} fill={LIME} mid>700</DraftText>
    <DraftText x={352} y={110} size={16} fill={LIME}>A6@500</DraftText>
    <DraftText x={352} y={146} size={16} fill={LIME}>A6@500</DraftText>
    <DraftText x={269} y={127} size={17} fill="#f00000" family={CAD_FONT} turn>700</DraftText>
    <DraftText x={360} y={191} size={30}>L-1形</DraftText>
  </Preview>
);

const ReinforceDialog = () => (
  <Dialog role="dialog" aria-labelledby="dialog-title">
    <DialogTitle>
      <span id="dialog-title">生成砌体加筋</span>
      <DialogClose aria-label="关闭">
        <svg width="9" height="9" viewBox="0 0 9 9">{line("M1 1l7 7M8 1l-7 7", "#fff", 1.5)}</svg>
      </DialogClose>
    </DialogTitle>
    <DialogBody onSubmit={(e) => e.preventDefault()}>
      <DialogColumns>
        <Designer>
          <TopPanels>
            <Titled>
              <div>加筋设置<Colon /></div>
              <SettingsPanel>
                <SettingsTable>
                  <colgroup>
                    <col style={{ width: 132 }} />
                    <col />
                  </colgroup>
                  <thead>
                    <tr>
                      <th>设置条件</th>
                      <th>加筋形式</th>
                    </tr>
                  </thead>
                  <tbody>
                    {settings.map(([condition, shape], i) => (
                      <tr key={condition}>
                        <td>{condition}</td>
                        <ShapeCell $focus={i === 0}>{shape}</ShapeCell>
                      </tr>
                    ))}
                  </tbody>
                </SettingsTable>
              </SettingsPanel>
            </Titled>
            <Titled $grow>
              <div>节点类型选择<Colon /></div>
              <JointPanel>
                <JointGrid>
                  {joints.map((j, i) => (
                    <JointCell key={j.name}>
                      <JointButton type="button" $selected={i === 0}>
                        <JointDrawing joint={j} />
                      </JointButton>
                    </JointCell>
                  ))}
                </JointGrid>
                <JointThumb $length="186px" />
              </JointPanel>
            </Titled>
          </TopPanels>
          <PreviewTitle>当前节点示意图<Colon /></PreviewTitle>
          <PreviewDrawing />
          <ModeSet>
            <legend>生成方式</legend>
            <ModeRow>
              <Choice $width={138}>
                <Radio name="mode" />
                选择图元
              </Choice>
              <Choice>
                <Radio name="mode" defaultChecked />
                选择楼层
              </Choice>
            </ModeRow>
            <ModeRow>
              <Choice>
                <Tick />
                覆盖同位置砌体加筋
              </Choice>
            </ModeRow>
          </ModeSet>
        </Designer>
        <FloorSet>
          <legend>选择楼层</legend>
          <FloorPane>
            <ul>
              {floors.map((f, i) => (
                <FloorRow key={i} $level={f.level}>
                  <Twist viewBox="0 0 20 10">
                    {f.branch && <path d="M9 2v6H3z" fill="#333" stroke="#333" strokeWidth="1" strokeLinejoin="round" />}
                  </Twist>
                  <label>
                    <Tick $mixed={f.mixed} defaultChecked={f.checked} />
                    {f.label}
                  </label>
                </FloorRow>
              ))}
            </ul>
            <FloorThumb />
          </FloorPane>
        </FloorSet>
      </DialogColumns>
      <Rule />
      <Footer>
        <Note>注<Colon />加筋形式为空时不生成砌体加筋</Note>
        <DialogButton $primary type="submit">确定</DialogButton>
        <DialogButton type="button">取消</DialogButton>
      </Footer>
    </DialogBody>
  </Dialog>
);

/* ---------- page ---------- */
const selectors: { label: string; value: string; width: number; offset?: number }[] = [
  { label: "单项工程", value: "岛三期地", width: 66, offset: -8 },
  { label: "楼层", value: "第3层", width: 100 },
  { label: "构件类别", value: "墙", width: 100 },
  { label: "构件类型", value: "砌体加筋", width: 99 },
  { label: "构件名称", value: "", width: 167 },
];

export default function App() {
  return (
    <>
      <GlobalStyle />
      <Shell>
        <RibbonBar />
        <SelectorBar>
          {selectors.map((s) => (
            <SelectorBox key={s.label} $width={s.width} $offset={s.offset}>
              <Selector aria-label={s.label} defaultValue={s.value}>
                <option value={s.value}>{s.value}</option>
              </Selector>
              <Caret />
            </SelectorBox>
          ))}
        </SelectorBar>
        <Workspace>
          <CategoryDock>
            <DockTitle>
              <TinyClose aria-label="关闭">
                <svg width="8" height="6" viewBox="0 0 8 6">{line("M1.500 .5l5 5M6.500 .5l-5 5", "#666", 1.5)}</svg>
              </TinyClose>
            </DockTitle>
            <DockBand />
            <ViewSwitch>
              <ViewButton aria-label="列表"><Icon name="listView" /></ViewButton>
              <ViewButton aria-label="面板"><Icon name="panelView" /></ViewButton>
            </ViewSwitch>
            <CategoryArea>
              <CategoryList>
                {categories.map((c, i) => (
                  <React.Fragment key={i}>
                    <CategoryHeading>{c.heading}</CategoryHeading>
                    {c.items.map(([icon, label]) => (
                      <CategoryRow key={label}>
                        <CategoryItem $active={icon === "rebar"}>
                          <Icon name={icon} />
                          {label}
                        </CategoryItem>
                      </CategoryRow>
                    ))}
                  </React.Fragment>
                ))}
              </CategoryList>
              <CategoryThumb $length="463px" />
            </CategoryArea>
          </CategoryDock>
          <ComponentDock>
            <ComponentPane $size={389}>
              <DockTitle />
              <Tabs>
                <Tab $active>构件列表</Tab>
                <Tab>图纸管理</Tab>
              </Tabs>
              <PaneTools>
                <ToolButton><Icon name="newItem" />新建<Caret /></ToolButton>
                <ToolButton disabled><Icon name="copyDoc" />复制</ToolButton>
                <ToolButton disabled><Icon name="removeDoc" />删除</ToolButton>
                <ToolButton><Icon name="floorCopy" />层间复制</ToolButton>
                <ToolButton aria-label="存盘"><Icon name="tableSave" /></ToolButton>
              </PaneTools>
              <SearchBox aria-label="搜索构件" placeholder="搜索构件..." />
              <ComponentTree>
                <li><SelectedNode>砌体加筋</SelectedNode></li>
              </ComponentTree>
            </ComponentPane>
            <ComponentPane>
              <DockTitle />
              <Tabs>
                <Tab $active>属性列表</Tab>
                <Tab>图层管理</Tab>
              </Tabs>
              <PropertyArea>
                <PropertyTable>
                  <colgroup>
                    <col style={{ width: 22 }} />
                    <col style={{ width: 101 }} />
                    <col style={{ width: 185 }} />
                    <col />
                  </colgroup>
                  <thead>
                    <tr>
                      <th />
                      <th>属性名称</th>
                      <th>属性值</th>
                      <th />
                    </tr>
                  </thead>
                  <tbody>
                    <tr>
                      <td>1</td>
                      <td />
                      <td />
                      <td />
                    </tr>
                  </tbody>
                </PropertyTable>
              </PropertyArea>
            </ComponentPane>
          </ComponentDock>
          <CadDrawing />
        </Workspace>
        <ReinforceDialog />
      </Shell>
    </>
  );
}
